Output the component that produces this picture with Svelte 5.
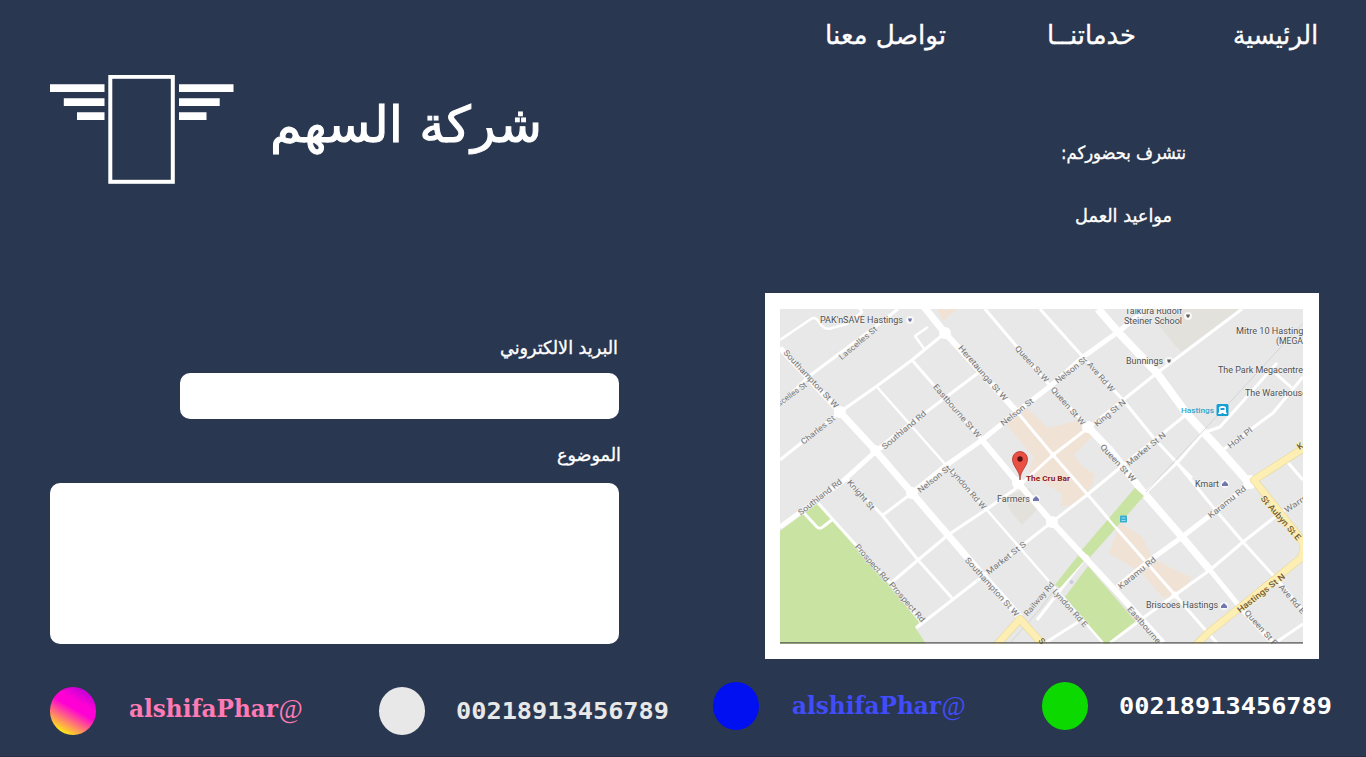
<script>
  const nav = [
    { text: 'تواصل معنا', w: 121, size: 26 },
    { text: 'خدماتنــا', w: 89, size: 26 },
    { text: 'الرئيسية', w: 85, size: 26 }
  ];

  const contacts = [
    { kind: 'handle', dot: 'insta', color: '#ff7bb5' },
    { kind: 'phone', dot: 'grey', color: '#e8e8e8' },
    { kind: 'handle', dot: 'blue', color: '#414dfa' },
    { kind: 'phone', dot: 'green', color: '#ffffff' }
  ];

  const roads = [
    { w: 2.5, d: 'M780 340L811 319Q815 316 819 322Q824 331 832 328L847 324L862 312L858 306M928 327L915 336L925 350' },
    { w: 3, d: 'M780 405L808 377L875 327L898 309' },
    { w: 3, d: 'M780 460L840 412L877 386L912 360L945 333' },
    { w: 5, d: 'M780 527L843 481L875 452L925 413' },
    { w: 3, d: 'M925 413L978 373' },
    { w: 3, d: 'M883 515L912 493' },
    { w: 5, d: 'M912 493L948 464L982 440L1018 411L1053 384L1083 357L1118 332L1147 309' },
    { w: 3, d: 'M891 583L918 560L948 535L987 509L1018 487L1053 455L1088 428L1123 400L1157 373L1242 309' },
    { w: 3, d: 'M916 628L978 580L1052 522L1087 495L1127 462L1187 414' },
    { w: 2.5, d: 'M877 387L945 464L987 510L1040 571L1103 643' },
    { w: 3, d: 'M845 477L882 515L918 560L952 598' },
    { w: 3, d: 'M818 503L890 583L921 622M804 513L817 527Q820 530 824 526L833 519' },
    { w: 3, d: 'M912 360L938 390L982 440' },
    { w: 3, d: 'M985 309L1045 380L1088 427' },
    { w: 3, d: 'M1040 309L1083 357L1123 400L1153 437L1177 463L1213 507L1243 542L1280 583L1303 610' },
    { w: 3, d: 'M1018 413L1053 455L1088 495L1118 530L1175 595L1208 633L1217 643' },
    { w: 5, d: 'M1117 587L1153 558L1182 537L1213 513L1250 484' },
    { w: 3, d: 'M1110 643L1143 618L1175 595L1210 570L1243 542L1280 513L1303 498' },
    { w: 3, d: 'M1037 620L1082 562L1143 495L1177 463L1203 433L1220 427L1277 363M1275 373L1292 388' },
    { w: 3, d: 'M1220 452L1273 413L1303 377M1177 463L1192 478M1284 458L1303 480M1045 643L1078 622M1275 643L1303 624' },
    { w: 5.5, d: 'M780 348L840 412L875 450L912 493' },
    { w: 7, d: 'M840 412L875 450L912 493L948 535L978 570L1020 617' },
    { w: 7, d: 'M921 303L945 333' },
    { w: 6, d: 'M945 333L978 369L1018 413' },
    { w: 6, d: 'M982 440L1018 483L1052 522L1090 563L1127 603L1163 643' },
    { w: 7.5, d: 'M1088 427L1110 450L1143 492L1182 537L1210 570' },
    { w: 5, d: 'M1210 570L1240 607L1273 643' },
    { w: 8, d: 'M1098 309L1118 332L1157 373L1187 414L1220 450L1250 484' }
  ];

  const junctions = [
    [840, 412, 6], [875, 450, 5], [912, 493, 6], [945, 333, 6], [1018, 483, 6],
    [1052, 522, 6], [1088, 427, 6], [1053, 455, 3], [1175, 595, 3.5], [1250, 482, 7]
  ];

  const streets = [
    ['Lascelles St', 858, 343, -40, 47], ['Southampton St W', 811, 379, 47, 76],
    ['scelles St', 792, 394, -36, 34], ['Charles St', 818, 430, -38, 41],
    ['Southland Rd', 904, 430, -40, 55], ['Eastbourne St W', 957, 411, 49, 68],
    ['Heretaunga St W', 983, 373, 49, 70], ['Queen St W', 1032, 364, 48, 46],
    ['Nelson St', 1017, 412, -38, 39], ['Nelson St', 1071, 370, -38, 38],
    ['Ave Rd W', 1101, 377, 49, 37], ['Queen St W', 1068, 406, 49, 48],
    ['King St N', 1110, 413, -39, 38], ['Queen St W', 1118, 463, 47, 48],
    ['Market St N', 1146, 449, -39, 48], ['Holt Pl', 1240, 438, -38, 29],
    ['Southland Rd', 820, 497, -38, 53], ['Knight St', 861, 495, 49, 37],
    ['Nelson St', 934, 479, -38, 39], ['Lyndon Rd W', 968, 489, 49, 51],
    ['Prospect Rd', 872, 563, 49, 47], ['Prospect Rd', 907, 602, 49, 50],
    ['Southampton St W', 992, 587, 48, 76], ['Market St S', 1006, 558, -38, 48],
    ['Railway Rd', 1039, 599, -50, 42], ['Lyndon Rd E', 1070, 608, 48, 48],
    ['Karamu Rd', 1227, 502, -39, 46], ['Karamu Rd', 1137, 573, -39, 46],
    ['Eastbourne', 1144, 625, 49, 46], ['Ave Rd E', 1292, 599, 49, 36],
    ['Queen St E', 1261, 628, 48, 45], ['Warren', 1298, 502, -34, 31]
  ];

  const places = [
    ['PAK\'nSAVE Hastings', 820, 323, 83], ['Taikura Rudolf', 1125, 314, 57],
    ['Steiner School', 1124, 324, 58], ['Bunnings', 1126, 364, 37],
    ['Mitre 10 Hastings', 1236, 334, 72], ['(MEGA)', 1276, 343.5, 30],
    ['The Park Megacentre', 1218, 373, 85], ['The Warehouse', 1245, 396, 62],
    ['Kmart', 1195, 487, 24], ['Farmers', 997, 502, 33],
    ['Briscoes Hastings', 1146, 608, 72]
  ];

  const markers = [[910, 320], [1188, 316], [1169, 361], [1225, 484], [1036, 499], [1224, 606]];
</script>

{#snippet label(text, w, size)}
  <svg class="label" width={w} height="40" role="img" aria-label={text}>
    <text x={w / 2} y="28" font-size={size} textLength={w} lengthAdjust="spacingAndGlyphs">{text}</text>
  </svg>
{/snippet}

<div class="page">
  <nav>
    {#each nav as item}
      <a href="#top">{@render label(item.text, item.w, item.size)}</a>
    {/each}
  </nav>

  <main>
    <section class="left">
      <header class="brand">
        <svg width="184" height="109" viewBox="0 0 184 109" fill="#fff">
          <rect x="60.3" y="1.8" width="62.5" height="105" fill="none" stroke="#fff" stroke-width="4" />
          <path d="M0 9.3h54.5v7.6H0zM13.8 23.3h40.7v7.6H13.8zM27 37.3h27.5v7.6H27zM129 9.3h54.5v7.6H129zM129 23.3h40.7v7.6H129zM129 37.3h27.5v7.6H129z" />
        </svg>
        <svg class="label title" width="268" height="109">
          <text x="134" y="67" font-size="50" textLength="272" lengthAdjust="spacingAndGlyphs">شركة السهم</text>
        </svg>
      </header>
      <form>
        <label class="mail-label" for="mail">{@render label('البريد الالكتروني', 118, 18)}</label>
        <input id="mail" type="text" />
        <label class="subject-label" for="subject">{@render label('الموضوع', 64, 18)}</label>
        <textarea id="subject"></textarea>
      </form>
    </section>

    <section class="right">
      <div class="info">
        {@render label('نتشرف بحضوركم:', 125, 18)}
        {@render label('مواعيد العمل', 97, 18)}
      </div>
      <div class="card">
        <svg class="map" viewBox="780 309 523 335">
          <rect x="780" y="309" width="523" height="335" fill="#e8e8e8" />
          <path fill="#e2e1dc" d="M1157 323L1168 309H1240L1181 352ZM1003 497L1030 488L1042 505L1022 525L1012 513Z" />
          <path fill="#c9e4a2" d="M780 531L818 503L921 620L915 627L926 644H780ZM1135 488L1144 496L1090 557L1082 550ZM1078 556L1084 561L1060 588L1055 585ZM1088 566L1137 623L1112 644H1104L1065 597Z" />
          <path fill="#f0e3d5" d="M937 309H957L943 321ZM1005 423L1026 407L1048 428L1077 421L1093 432L1091 438L1074 455L1080 464L1095 475L1093 484L1078 505L1060 506L1062 494L1028 472L1034 457ZM1120 523L1142 536L1153 559L1192 578L1177 596L1163 598L1143 574L1109 553Z" />
          <g fill="none" stroke="#fff" stroke-linejoin="round">
            {#each roads as r}
              <path d={r.d} stroke-width={r.w} />
            {/each}
          </g>
          {#each junctions as [x, y, r]}
            <circle cx={x} cy={y} {r} fill="#fff" />
          {/each}
          <path fill="none" stroke="#cfcfcf" stroke-width=".8" d="M1303 323L1220 413L1157 480L1146 492M1053 592L1040 609L1010 643" />
          <path fill="#c9e4a2" d="M1135 488L1144 496L1090 557L1082 550ZM1078 556L1084 561L1060 588L1055 585Z" />
          <path fill="none" stroke="#fff" stroke-width="2.5" d="M1104 514L1116 528" />
          <g fill="none" stroke-linejoin="round">
            <path stroke="#eadba5" stroke-width="8" d="M1310 444L1254 480L1300 538Q1306 545 1301 558L1243 605L1208 633L1194 647M995 647L1020 619L1045 647" />
            <path stroke="#fdefb3" stroke-width="6.5" d="M1310 444L1254 480L1300 538Q1306 545 1301 558L1243 605L1208 633L1194 647M995 647L1020 619L1045 647" />
          </g>
          <g class="street">
            {#each streets as [name, x, y, a, w]}
              <text transform="translate({x} {y}) rotate({a})" y="2.7" textLength={w} lengthAdjust="spacingAndGlyphs">{name}</text>
            {/each}
          </g>
          <g class="street yellow">
            <text transform="translate(1281 518) rotate(49)" y="3" textLength="56" lengthAdjust="spacingAndGlyphs">St Aubyn St E</text>
            <text transform="translate(1261 593) rotate(-38)" y="3" textLength="58" lengthAdjust="spacingAndGlyphs">Hastings St N</text>
            <text transform="translate(1300 446) rotate(-34)" y="3">K</text>
            <text transform="translate(1042 641) rotate(49)" y="3">S</text>
          </g>
          <g class="place">
            {#each places as [name, x, y, w]}
              <text {x} {y} textLength={w} lengthAdjust="spacingAndGlyphs">{name}</text>
            {/each}
          </g>
          {#each markers as [x, y], i}
            <circle cx={x} cy={y} r="4" fill="#f8f8f8" />
            {#if i < 3}
              <path d="M{x - 2} {y - 1.5}h4l-1 3h-2z" fill={i === 0 ? '#6b70a8' : '#655c5c'} />
            {:else}
              <path d="M{x - 3} {y + 2}v-2l3 -3l3 3v2z" fill="#7276ad" />
            {/if}
          {/each}
          <text class="station" x="1181" y="412.5" textLength="33" lengthAdjust="spacingAndGlyphs">Hastings</text>
          <rect x="1216.5" y="404" width="12" height="12" rx="1.5" fill="#159fd3" />
          <path fill="#fff" d="M1219 412V408Q1219 406 1222.5 406Q1226 406 1226 408V412L1227 414H1224L1223 413H1222L1221 414H1218Z" />
          <path fill="#159fd3" d="M1220.5 408h4v2h-4z" />
          <rect x="1120" y="515.5" width="7" height="7" rx="1" fill="#35add0" />
          <path stroke="#a7deed" d="M1121.5 518h4M1121.5 520.5h4" />
          <circle cx="1071.5" cy="582" r="2" fill="#c9ccda" />
          <path fill="#e94f43" stroke="#b5332b" stroke-width=".8" d="M1020 480C1020 470 1012.5 467 1012.5 459A7.5 7.5 0 0 1 1027.5 459C1027.5 467 1020 470 1020 480Z" />
          <circle cx="1020" cy="459" r="2.7" fill="#541312" />
          <text class="pin" x="1026" y="480.5" textLength="44" lengthAdjust="spacingAndGlyphs">The Cru Bar</text>
          <path fill="#555" d="M780 642.3h523v1.2H780z" />
        </svg>
      </div>
    </section>
  </main>

  <footer>
    {#each contacts as c, i}
      <div class="contact" class:raised={i > 1}>
        <span class="dot {c.dot}"></span>
        {#if c.kind === 'handle'}
          <svg class="handle" width="173" height="48" fill={c.color}>
            <text x="0" y="30" font-size="24.5" textLength="149" lengthAdjust="spacingAndGlyphs">alshifaPhar</text>
            <text class="at" x="149.5" y="30.5" font-size="28" textLength="24" lengthAdjust="spacingAndGlyphs">@</text>
          </svg>
        {:else}
          <svg class="phone" width="212" height="48" fill={c.color}>
            <text x="-1" y="32" font-size="23" textLength="213" lengthAdjust="spacingAndGlyphs">00218913456789</text>
          </svg>
        {/if}
      </div>
    {/each}
  </footer>
</div>

<style>
  :global(body) { margin: 0; background: #2a3750; }
  .page {
    width: 1366px;
    height: 757px;
    box-sizing: border-box;
    overflow: hidden;
    background: #2a3750;
    border-bottom: 1px solid #242f47;
    font-family: "DejaVu Sans", sans-serif;
  }
  svg { display: block; flex: none; }
  .label { overflow: visible; fill: #fff; stroke: #fff; stroke-width: .35px; direction: rtl; }
  .label text { text-anchor: middle; }
  .title { stroke-width: 1px; }
  nav {
    display: flex;
    justify-content: flex-end;
    gap: 97px;
    height: 52px;
    padding: 16px 48px 0 0;
  }
  nav a:first-child { margin-right: 4px; }
  main {
    display: grid;
    grid-template-columns: 569px 554px;
    column-gap: 146px;
    height: 591px;
    padding-left: 50px;
    padding-top: 0;
  }
  .brand { display: flex; gap: 38px; padding-top: 7px; }
  nav + main { margin-top: 0; }
  form { display: flex; flex-direction: column; align-items: flex-end; padding-top: 142px; }
  .mail-label { height: 47px; padding-right: 1px; }
  .subject-label { height: 50px; margin-top: 14px; margin-right: -2px; }
  input, textarea {
    box-sizing: border-box;
    border: 0;
    border-radius: 10px;
    background: #fff;
    padding: 8px;
    resize: none;
  }
  input { width: 439px; height: 45.5px; margin-right: .5px; }
  textarea { width: 569px; height: 161px; margin-top: .5px; }
  .info {
    display: flex;
    flex-direction: column;
    align-items: center;
    gap: 23px;
    height: 162px;
    padding: 63px 0 0 163px;
  }
  .card { height: 335px; padding: 16px 16px 15px 15px; background: #fff; }
  .map { width: 523px; height: 335px; font-family: Roboto, sans-serif; }
  .street { fill: #777; font-size: 8px; text-anchor: middle; stroke: #eee; stroke-width: 1.2px; paint-order: stroke; }
  .yellow { fill: #735c3c; stroke: #fdefb3; font-weight: 500; font-size: 8.5px; }
  .place { fill: #505050; font-size: 8.5px; stroke: #f0f0f0; stroke-width: 1.2px; paint-order: stroke; }
  .station { fill: #35a5cc; font-size: 8px; font-weight: 500; }
  .pin { fill: #8c1a21; font-size: 8px; font-weight: 700; stroke: #f5e9df; stroke-width: 1px; paint-order: stroke; }
  footer {
    display: grid;
    grid-template-columns: 329px 334px 329px 290px;
    padding: 28px 0 0 50px;
  }
  .contact { display: flex; gap: 33px; height: 48px; }
  .raised { margin-top: -5px; }
  .raised .handle { margin-top: 2px; }
  .contact:nth-child(even) { gap: 32px; }
  .dot { width: 46px; height: 47.5px; border-radius: 50%; flex: none; }
  .insta { background: linear-gradient(30deg, #ffe51a 14%, #ff00d4 54%, #ff00d4 66%, #b000d8 94%); }
  .grey { background: #e8e8e8; }
  .blue { background: #0010f0; }
  .green { background: #0bd900; }
  .handle { font-family: "DejaVu Serif", serif; font-weight: 700; overflow: visible; }
  .at { font-family: "Liberation Serif", serif; font-weight: 400; font-style: italic; }
  .phone { font-family: "DejaVu Sans Mono", monospace; font-weight: 700; overflow: visible; }
</style>
